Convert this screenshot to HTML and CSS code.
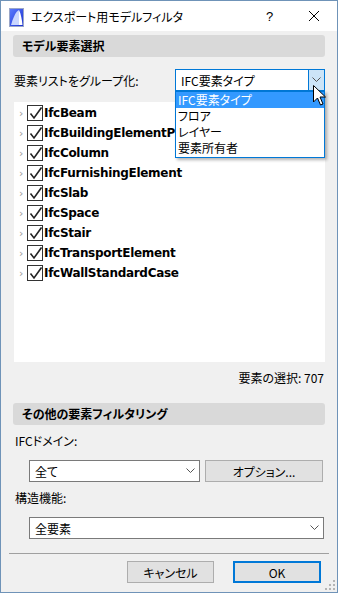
FILE: index.html
```html
<!DOCTYPE html>
<html lang="ja">

<head>
	<meta charset="UTF-8">
	<meta name="viewport" content="width=device-width, initial-scale=1.0">
	<link rel="stylesheet" href="styles.css">
	<title>エクスポート用モデルフィルタ</title>
</head>

<body>
	<div class="window">
		<div class="titlebar">
			<svg class="app-icon" width="15" height="19" viewBox="0 0 15 19">
				<defs>
					<linearGradient id="g" x1="0" y1="0" x2="1" y2="1">
						<stop offset="0" stop-color="#5b7cff" />
						<stop offset="1" stop-color="#1a2fd0" />
					</linearGradient>
				</defs>
				<rect x="0.5" y="0.5" width="14" height="18" fill="url(#g)" stroke="#9aa6c8" />
				<path d="M2 17 C4 10 7 3 10 2 L10 17 Z" fill="#c9d6ff" />
				<path d="M10 2 C12 6 13 12 13.5 17 L10 17 Z" fill="#ffffff" />
			</svg>
			<span class="title">エクスポート用モデルフィルタ</span>
			<span class="title-help">?</span>
			<span class="title-close">
				<svg width="12" height="12" viewBox="0 0 12 12">
					<path d="M1 1 L11 11 M11 1 L1 11" stroke="#000" stroke-width="1" />
				</svg>
			</span>
		</div>

		<div class="content">
			<div class="section-head">モデル要素選択</div>

			<div class="group-row">
				<span class="label">要素リストをグループ化:</span>
				<div class="select select-open">
					<span class="select-value">IFC要素タイプ</span>
					<span class="select-btn">
						<svg width="9" height="6" viewBox="0 0 9 6">
							<path d="M0.5 0.5 L4.5 4.5 L8.5 0.5" fill="none" stroke="#555" />
						</svg>
					</span>
					<ul class="dropdown">
						<li class="dropdown-item active">IFC要素タイプ</li>
						<li class="dropdown-item">フロア</li>
						<li class="dropdown-item">レイヤー</li>
						<li class="dropdown-item">要素所有者</li>
					</ul>
				</div>
			</div>

			<div class="tree" id="tree"></div>

			<div class="count">要素の選択: 707</div>

			<div class="section-head">その他の要素フィルタリング</div>

			<div class="field-label">IFCドメイン:</div>
			<div class="field-row">
				<div class="select select-domain">
					<span class="select-value">全て</span>
					<span class="select-arrow">
						<svg width="9" height="6" viewBox="0 0 9 6">
							<path d="M0.5 0.5 L4.5 4.5 L8.5 0.5" fill="none" stroke="#555" />
						</svg>
					</span>
				</div>
				<button class="btn btn-options" type="button">オプション...</button>
			</div>

			<div class="field-label">構造機能:</div>
			<div class="field-row">
				<div class="select select-wide">
					<span class="select-value">全要素</span>
					<span class="select-arrow">
						<svg width="9" height="6" viewBox="0 0 9 6">
							<path d="M0.5 0.5 L4.5 4.5 L8.5 0.5" fill="none" stroke="#555" />
						</svg>
					</span>
				</div>
			</div>

			<div class="separator"></div>

			<div class="footer">
				<button class="btn btn-cancel" type="button">キャンセル</button>
				<button class="btn btn-ok" type="button">OK</button>
			</div>
		</div>

		<svg class="grip" width="10" height="10" viewBox="0 0 10 10">
			<rect x="8" y="0" width="2" height="2" fill="#b4b4b4" />
			<rect x="4" y="4" width="2" height="2" fill="#b4b4b4" />
			<rect x="8" y="4" width="2" height="2" fill="#b4b4b4" />
			<rect x="0" y="8" width="2" height="2" fill="#b4b4b4" />
			<rect x="4" y="8" width="2" height="2" fill="#b4b4b4" />
			<rect x="8" y="8" width="2" height="2" fill="#b4b4b4" />
		</svg>

		<svg class="cursor" width="14" height="22" viewBox="0 0 14 22">
			<path d="M0.5 0.5 L0.5 17 L4.5 13 L7.5 20 L10 19 L7 12 L12.5 12 Z" fill="#fff" stroke="#000" stroke-width="1" />
		</svg>
	</div>

	<script>
		const items = ['IfcBeam', 'IfcBuildingElementP', 'IfcColumn', 'IfcFurnishingElement',
			'IfcSlab', 'IfcSpace', 'IfcStair', 'IfcTransportElement', 'IfcWallStandardCase']
		const tree = document.querySelector('#tree')
		for (let i = 0; i < items.length; i++) {
			let row = document.createElement('div')
			row.className = 'tree-row'
			row.innerHTML = `<span class="tree-arrow">&#8250;</span>` +
				`<span class="check"><svg width="13" height="13" viewBox="0 0 13 13">` +
				`<path d="M1.5 6.5 L5 11 L12.5 0.5" fill="none" stroke="#222" stroke-width="1.6"/></svg></span>` +
				`<span class="tree-text">${items[i]}</span>`
			tree.appendChild(row)
		}
	</script>
</body>

</html>
```

FILE: styles.css
```css
* {
	box-sizing: border-box;
}

body {
	margin: 0;
	font-family: "Noto Sans CJK JP", "Noto Sans", sans-serif;
	font-size: 12px;
	font-feature-settings: "palt";
	color: #000;
}

.window {
	position: relative;
	width: 338px;
	height: 593px;
	border: 1px solid #6f93b8;
	background: #f0f0f0;
	overflow: hidden;
}

.titlebar {
	height: 30px;
	background: #fff;
	display: flex;
	align-items: center;
	padding-left: 8px;
}

.app-icon {
	margin-top: 2px;
}

.title {
	margin-left: 7px;
	font-size: 12px;
	flex: 1;
}

.title-help {
	width: 20px;
	font-size: 13px;
	font-family: "Liberation Sans", sans-serif;
	margin-right: 22px;
}

.title-close {
	width: 24px;
	display: flex;
	margin-right: 5px;
}

.content {
	padding: 4px 12px 0 12px;
}

.section-head {
	height: 22px;
	background: #d9d9d9;
	border-radius: 3px;
	font-weight: bold;
	padding-left: 9px;
	line-height: 22px;
}

.group-row {
	display: flex;
	align-items: center;
	justify-content: space-between;
	margin-top: 12px;
	padding-left: 1px;
}

.select {
	position: relative;
	height: 22px;
	background: #fff;
	border: 1px solid #7a7a7a;
	display: flex;
	align-items: center;
}

.select-value {
	flex: 1;
	padding-left: 5px;
}

.select-open {
	width: 150px;
	border-color: #0078d7;
}

.select-btn {
	width: 16px;
	height: 20px;
	background: #cce4f7;
	border-left: 1px solid #0078d7;
	display: flex;
	align-items: center;
	justify-content: center;
}

.select-arrow {
	width: 18px;
	display: flex;
	justify-content: center;
}

.dropdown {
	position: absolute;
	left: -1px;
	top: 21px;
	width: 150px;
	margin: 0;
	padding: 0 0 1px 0;
	list-style: none;
	background: #fff;
	border: 1px solid #0078d7;
	box-shadow: 2px 2px 3px rgba(0, 0, 0, 0.3);
	z-index: 2;
}

.dropdown-item {
	height: 16px;
	line-height: 16px;
	padding-left: 2px;
}

.dropdown-item.active {
	background: #3399ff;
	color: #fff;
}

.tree {
	margin-top: 11px;
	margin-left: 1px;
	height: 260px;
	background: #fff;
	padding-top: 1px;
}

.tree-row {
	height: 20px;
	display: flex;
	align-items: center;
}

.tree-arrow {
	width: 13px;
	padding-left: 5px;
	color: #9a9a9a;
	font-size: 11px;
	font-family: "DejaVu Sans", sans-serif;
}

.check {
	width: 16px;
	height: 16px;
	border: 1px solid #333;
	display: flex;
	align-items: center;
	justify-content: center;
	background: #fff;
}

.tree-text {
	margin-left: 1px;
	font-family: "DejaVu Sans", sans-serif;
	font-weight: bold;
	font-size: 12px;
	letter-spacing: -0.3px;
	white-space: nowrap;
}

.count {
	text-align: right;
	margin-top: 7px;
	padding-right: 1px;
	height: 34px;
}

.field-label {
	margin-top: 7px;
	padding-left: 2px;
	height: 18px;
}

.field-row {
	display: flex;
	margin-top: 10px;
	padding-left: 16px;
	gap: 5px;
}

.select-domain {
	width: 171px;
}

.select-wide {
	width: 295px;
}

.btn {
	font-family: "Noto Sans CJK JP", "Noto Sans", sans-serif;
	font-size: 12px;
	font-feature-settings: "palt";
	height: 22px;
	background: #e1e1e1;
	border: 1px solid #adadad;
	padding: 0;
	color: #000;
}

.btn-options {
	width: 118px;
}

.separator {
	height: 1px;
	background: #a0a0a0;
	margin: 14px -4px 0 -4px;
}

.footer {
	display: flex;
	justify-content: flex-end;
	gap: 19px;
	margin-top: 7px;
	padding-right: 4px;
}

.btn-cancel {
	width: 87px;
}

.btn-ok {
	width: 88px;
	border: 2px solid #0078d7;
}

.grip {
	position: absolute;
	right: 2px;
	bottom: 2px;
}

.cursor {
	position: absolute;
	left: 312px;
	top: 84px;
	z-index: 3;
}
```
